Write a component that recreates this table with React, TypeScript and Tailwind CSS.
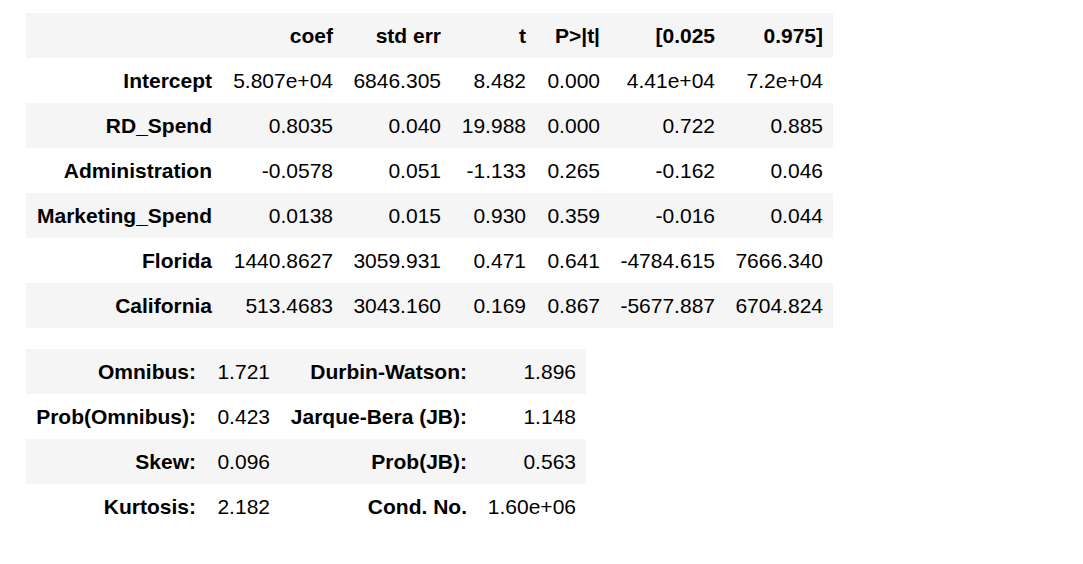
const coefHead = ["", "coef", "std err", "t", "P>|t|", "[0.025", "0.975]"];

const coefRows = [
  ["Intercept", "5.807e+04", "6846.305", "8.482", "0.000", "4.41e+04", "7.2e+04"],
  ["RD_Spend", "0.8035", "0.040", "19.988", "0.000", "0.722", "0.885"],
  ["Administration", "-0.0578", "0.051", "-1.133", "0.265", "-0.162", "0.046"],
  ["Marketing_Spend", "0.0138", "0.015", "0.930", "0.359", "-0.016", "0.044"],
  ["Florida", "1440.8627", "3059.931", "0.471", "0.641", "-4784.615", "7666.340"],
  ["California", "513.4683", "3043.160", "0.169", "0.867", "-5677.887", "6704.824"],
];

const diagRows = [
  ["Omnibus:", "1.721", "Durbin-Watson:", "1.896"],
  ["Prob(Omnibus):", "0.423", "Jarque-Bera (JB):", "1.148"],
  ["Skew:", "0.096", "Prob(JB):", "0.563"],
  ["Kurtosis:", "2.182", "Cond. No.", "1.60e+06"],
];

export default function App() {
  return (
    <div
      className="w-[1083px] h-[564px] bg-white text-black text-[21px] pt-[13px] pl-[26px]"
      style={{ fontFamily: '"Liberation Sans", Arial, sans-serif' }}
    >
      {/* coefficient table */}
      <table className="table-fixed border-collapse w-[807px]">
        <colgroup>
          <col className="w-[196px]" />
          <col className="w-[121px]" />
          <col className="w-[108px]" />
          <col className="w-[85px]" />
          <col className="w-[74px]" />
          <col className="w-[115px]" />
          <col className="w-[108px]" />
        </colgroup>
        <thead>
          <tr className="h-[45px] bg-[#f5f5f5]">
            {coefHead.map((h, i) => (
              <th key={i} className="px-[10px] text-right font-bold whitespace-nowrap">
                {h}
              </th>
            ))}
          </tr>
        </thead>
        <tbody>
          {coefRows.map((r, i) => (
            <tr key={i} className={i % 2 === 1 ? "h-[45px] bg-[#f5f5f5]" : "h-[45px] bg-white"}>
              {r.map((c, j) =>
                j === 0 ? (
                  <th key={j} className="px-[10px] text-right font-bold whitespace-nowrap">
                    {c}
                  </th>
                ) : (
                  <td key={j} className="px-[10px] text-right whitespace-nowrap">
                    {c}
                  </td>
                )
              )}
            </tr>
          ))}
        </tbody>
      </table>

      {/* diagnostics table */}
      <table className="table-fixed border-collapse w-[560px] mt-[21px]">
        <colgroup>
          <col className="w-[180px]" />
          <col className="w-[74px]" />
          <col className="w-[197px]" />
          <col className="w-[109px]" />
        </colgroup>
        <tbody>
          {diagRows.map((r, i) => (
            <tr key={i} className={i % 2 === 0 ? "h-[45px] bg-[#f5f5f5]" : "h-[45px] bg-white"}>
              <th className="px-[10px] text-right font-bold whitespace-nowrap">{r[0]}</th>
              <td className="px-[10px] text-right whitespace-nowrap">{r[1]}</td>
              <th className="px-[10px] text-right font-bold whitespace-nowrap">{r[2]}</th>
              <td className="px-[10px] text-right whitespace-nowrap">{r[3]}</td>
            </tr>
          ))}
        </tbody>
      </table>
    </div>
  );
}
